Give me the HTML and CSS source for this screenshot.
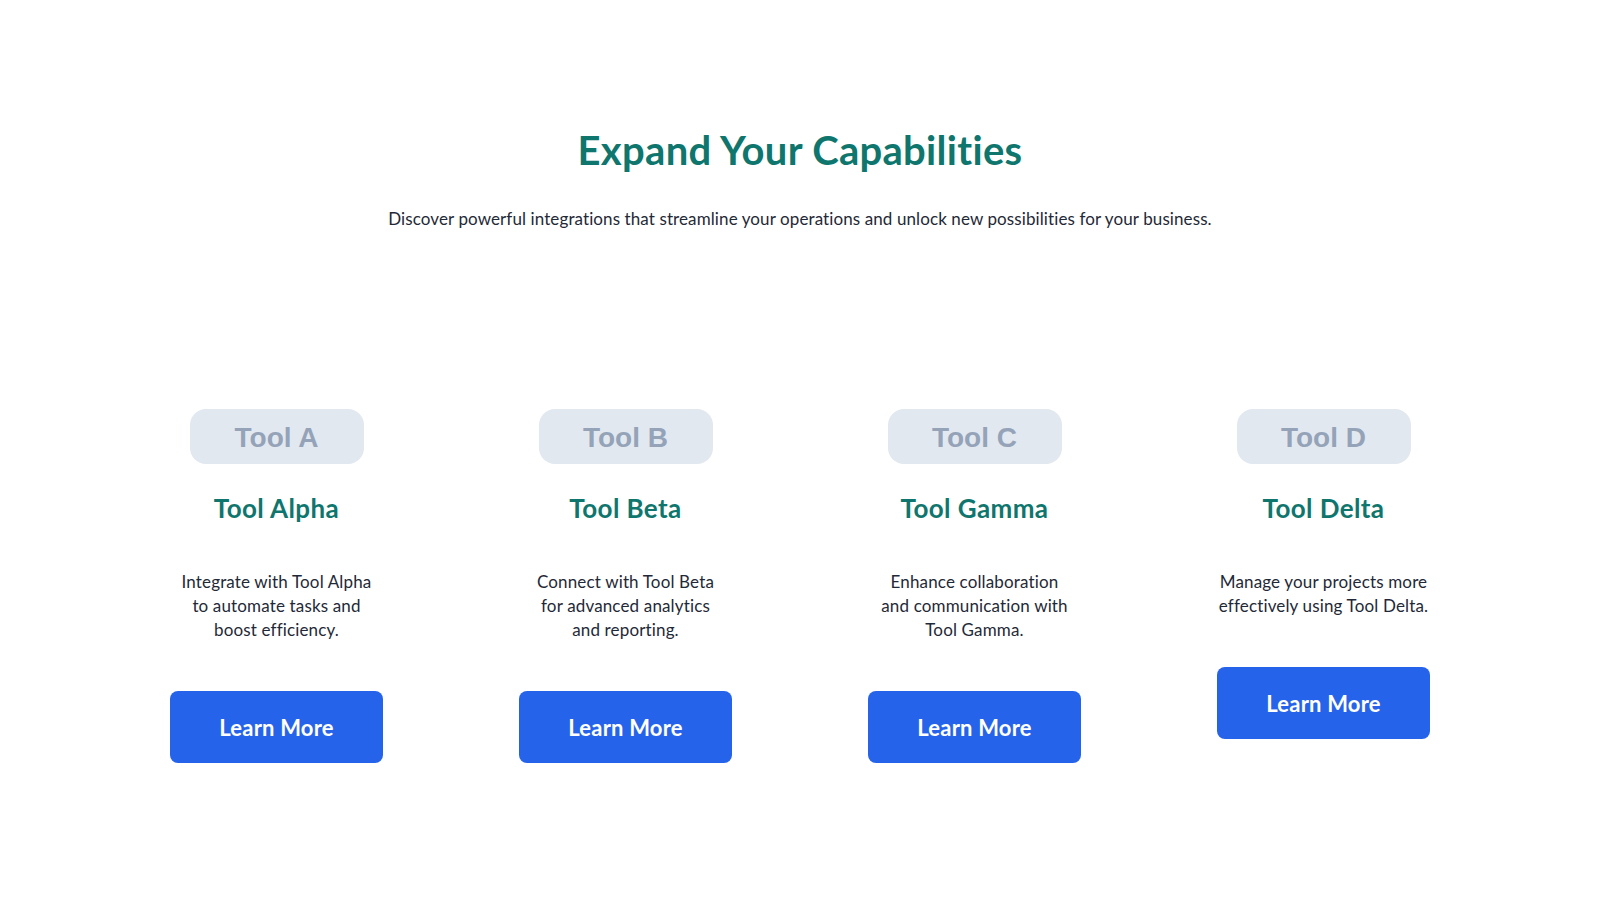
FILE: index.html
```html
<!DOCTYPE html>
<html lang="en">
<head>
<meta charset="utf-8">
<title>Expand Your Capabilities</title>
<link rel="stylesheet" href="styles.css">
</head>
<body>
<section class="integrations">
  <header class="intro">
    <h1 class="intro-title">Expand Your Capabilities</h1>
    <p class="intro-text">Discover powerful integrations that streamline your operations and unlock new possibilities for your business.</p>
  </header>
  <div class="tool-grid">
    <article class="tool-card">
      <div class="tool-logo">Tool A</div>
      <h2 class="tool-name">Tool Alpha</h2>
      <p class="tool-desc">Integrate with Tool Alpha<br>to automate tasks and<br>boost efficiency.</p>
      <a class="tool-btn" href="#">Learn More</a>
    </article>
    <article class="tool-card">
      <div class="tool-logo">Tool B</div>
      <h2 class="tool-name">Tool Beta</h2>
      <p class="tool-desc">Connect with Tool Beta<br>for advanced analytics<br>and reporting.</p>
      <a class="tool-btn" href="#">Learn More</a>
    </article>
    <article class="tool-card">
      <div class="tool-logo">Tool C</div>
      <h2 class="tool-name">Tool Gamma</h2>
      <p class="tool-desc">Enhance collaboration<br>and communication with<br>Tool Gamma.</p>
      <a class="tool-btn" href="#">Learn More</a>
    </article>
    <article class="tool-card">
      <div class="tool-logo">Tool D</div>
      <h2 class="tool-name">Tool Delta</h2>
      <p class="tool-desc">Manage your projects more<br>effectively using Tool Delta.</p>
      <a class="tool-btn" href="#">Learn More</a>
    </article>
  </div>
</section>
</body>
</html>
```
FILE: styles.css
```css
* { box-sizing: border-box; }
html, body { margin: 0; padding: 0; background: #ffffff; }
body {
  font-family: "Lato", "Noto Sans", sans-serif;
  color: #1f2937;
}
.integrations {
  padding-top: 126px;
}
.intro {
  text-align: center;
}
.intro-title {
  margin: 0;
  font-size: 40px;
  line-height: 48px;
  font-weight: 700;
  letter-spacing: 0.3px;
  color: #0f766e;
}
.intro-text {
  margin: 31px 0 0;
  font-size: 17px;
  line-height: 28px;
  letter-spacing: 0.1px;
  color: #1f2937;
}
.tool-grid {
  width: 1364px;
  margin: 176px auto 0;
  display: grid;
  grid-template-columns: repeat(4, 1fr);
  column-gap: 32px;
  align-items: start;
}
.tool-card {
  display: flex;
  flex-direction: column;
  align-items: center;
  text-align: center;
}
.tool-logo {
  width: 174px;
  height: 55px;
  border-radius: 16px;
  background: #e2e8f0;
  color: #94a3b8;
  font-family: "Liberation Sans", Arial, sans-serif;
  font-size: 28px;
  font-weight: 700;
  display: flex;
  align-items: center;
  justify-content: center;
  padding-top: 2px;
}
.tool-name {
  margin: 28px 0 0;
  font-size: 26px;
  line-height: 32px;
  font-weight: 700;
  letter-spacing: 0.4px;
  color: #0f766e;
}
.tool-desc {
  margin: 46px 0 0;
  font-size: 17px;
  line-height: 24px;
  letter-spacing: 0.15px;
  color: #1f2937;
}
.tool-btn {
  margin-top: 49px;
  width: 213px;
  height: 72px;
  border-radius: 8px;
  background: #2563eb;
  color: #ffffff;
  text-decoration: none;
  font-size: 22px;
  font-weight: 700;
  letter-spacing: 0.2px;
  display: flex;
  align-items: center;
  justify-content: center;
}
```
